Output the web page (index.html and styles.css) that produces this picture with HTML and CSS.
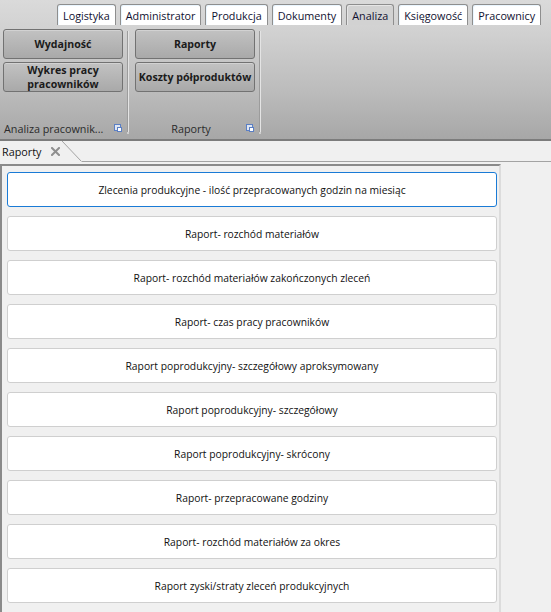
FILE: index.html
```html
<!DOCTYPE html>
<html lang="pl">
<head>
<meta charset="utf-8">
<title>Raporty</title>
<link rel="stylesheet" href="styles.css">
</head>
<body>
<header class="header">
  <nav class="tabs">
    <span class="tab">Logistyka</span>
    <span class="tab">Administrator</span>
    <span class="tab">Produkcja</span>
    <span class="tab">Dokumenty</span>
    <span class="tab tab-active">Analiza</span>
    <span class="tab">Księgowość</span>
    <span class="tab">Pracownicy</span>
  </nav>
  <div class="ribbon">
    <section class="group">
      <div class="group-buttons">
        <button class="rbtn">Wydajność</button>
        <button class="rbtn">Wykres pracy<br>pracowników</button>
      </div>
      <div class="group-label">
        <span class="group-title group-title-left">Analiza pracownik...</span>
        <svg class="launcher" width="8" height="8" viewBox="0 0 8 8"><rect x="0.5" y="0.5" width="6" height="6" fill="#dfe6f2" stroke="#5b7fc4"/><rect x="3" y="3" width="5" height="5" fill="#5b7fc4"/><rect x="4" y="4" width="3" height="3" fill="#ffffff"/></svg>
      </div>
    </section>
    <div class="sep"></div>
    <section class="group">
      <div class="group-buttons">
        <button class="rbtn">Raporty</button>
        <button class="rbtn">Koszty półproduktów</button>
      </div>
      <div class="group-label">
        <span class="group-title">Raporty</span>
        <svg class="launcher" width="8" height="8" viewBox="0 0 8 8"><rect x="0.5" y="0.5" width="6" height="6" fill="#dfe6f2" stroke="#5b7fc4"/><rect x="3" y="3" width="5" height="5" fill="#5b7fc4"/><rect x="4" y="4" width="3" height="3" fill="#ffffff"/></svg>
      </div>
    </section>
    <div class="sep"></div>
  </div>
</header>

<div class="doc-tabs">
  <div class="doc-tab">
    <span class="doc-tab-title">Raporty</span>
    <svg class="doc-close" width="9" height="9" viewBox="0 0 9 9"><path d="M1 1 L8 8 M8 1 L1 8" stroke="#8f8f8f" stroke-width="2" stroke-linecap="square"/></svg>
  </div>
  <svg class="doc-slope" width="20" height="22" viewBox="0 0 20 22"><line x1="0" y1="0" x2="19.5" y2="20.5" stroke="#a3a3a3" stroke-width="1"/></svg>
  <div class="doc-fill"></div>
</div>

<main class="panel">
  <button class="report report-focus">Zlecenia produkcyjne - ilość przepracowanych godzin na miesiąc</button>
  <button class="report">Raport- rozchód materiałów</button>
  <button class="report">Raport- rozchód materiałów zakończonych zleceń</button>
  <button class="report">Raport- czas pracy pracowników</button>
  <button class="report">Raport poprodukcyjny- szczegółowy aproksymowany</button>
  <button class="report">Raport poprodukcyjny- szczegółowy</button>
  <button class="report">Raport poprodukcyjny- skrócony</button>
  <button class="report">Raport- przepracowane godziny</button>
  <button class="report">Raport- rozchód materiałów za okres</button>
  <button class="report">Raport zyski/straty zleceń produkcyjnych</button>
</main>
</body>
</html>
```

FILE: styles.css
```css
* { box-sizing: border-box; }

html, body {
  margin: 0;
  padding: 0;
  background: #f0f0f0;
  font-family: "Open Sans", "Noto Sans", "DejaVu Sans", sans-serif;
  font-size: 11px;
  color: #111;
  overflow: hidden;
}

/* ---------- ribbon header ---------- */
.header {
  height: 141px;
  background: linear-gradient(#dadada 0%, #d0d0d0 25%, #bcbcbc 65%, #a7a7a7 100%);
  border-bottom: 2px solid #7c7c7c;
  display: flex;
  flex-direction: column;
}

.tabs {
  height: 25px;
  display: flex;
  align-items: flex-end;
  gap: 4px;
  padding-left: 57px;
}

.tab {
  height: 21px;
  padding: 2px 5px 0;
  background: #ffffff;
  border: 1px solid #8e8e8e;
  border-bottom: none;
  border-radius: 3px 3px 0 0;
  box-shadow: inset 1px 1px 0 #eaf6ff;
  font-size: 10.8px;
  line-height: 17px;
  color: #101030;
  white-space: nowrap;
}

.tab-active {
  background: #d2d2d2;
  box-shadow: inset 1px 1px 0 #e6e6e6;
}

.ribbon {
  flex: 1;
  display: flex;
  padding: 4px 0 3px 3px;
}

.group {
  width: 120px;
  display: flex;
  flex-direction: column;
  justify-content: space-between;
}

.group-buttons {
  display: flex;
  flex-direction: column;
  gap: 3px;
}

.rbtn {
  width: 120px;
  height: 30px;
  margin: 0;
  padding: 0;
  border: 1px solid #727272;
  border-radius: 3px;
  background: linear-gradient(#c2c2c2, #a9a9a9);
  box-shadow: inset 0 1px 0 #d2d2d2;
  font-family: inherit;
  font-size: 10.6px;
  font-weight: 700;
  line-height: 14px;
  color: #1b1b1b;
  white-space: nowrap;
}

.group-label {
  height: 16px;
  display: flex;
  align-items: center;
  justify-content: space-between;
  padding: 0 1px;
  color: #2a2a2a;
  font-size: 10.8px;
}

.group-title {
  flex: 1;
  text-align: center;
}

.group-title-left {
  text-align: left;
}

.launcher {
  flex: none;
}

.sep {
  width: 2px;
  margin: 2px 6px 2px 4px;
  background: linear-gradient(90deg, #9c9c9c 50%, #e4e4e4 50%);
  border-bottom: 2px solid #cfcfcf;
}

/* ---------- document tab strip ---------- */
.doc-tabs {
  height: 23px;
  display: flex;
  align-items: stretch;
}

.doc-tab {
  flex: none;
  width: 62px;
  display: flex;
  align-items: center;
  gap: 10px;
  padding: 0 0 2px 2px;
}

.doc-tab-title {
  font-size: 10.8px;
  color: #111;
}

.doc-close {
  display: block;
  flex: none;
}

.doc-slope {
  display: block;
  flex: none;
}

.doc-fill {
  flex: 1;
  border-bottom: 1px solid #a3a3a3;
  margin-bottom: 2px;
}

/* ---------- report list ---------- */
.panel {
  width: 501px;
  height: 460px;
  border-top: 2px solid #8a8a8a;
  border-left: 2px solid #8a8a8a;
  border-right: 2px solid #dcdcdc;
  padding: 6px 3px 0 5px;
  display: flex;
  flex-direction: column;
  gap: 9px;
}

.report {
  flex: none;
  width: 490px;
  height: 35px;
  margin: 0;
  background: #ffffff;
  border: 1px solid #cfcfcf;
  border-radius: 3px;
  font-family: inherit;
  font-size: 10.3px;
  color: #111;
  text-align: center;
}

.report-focus {
  border-color: #1a7bd6;
}
```
